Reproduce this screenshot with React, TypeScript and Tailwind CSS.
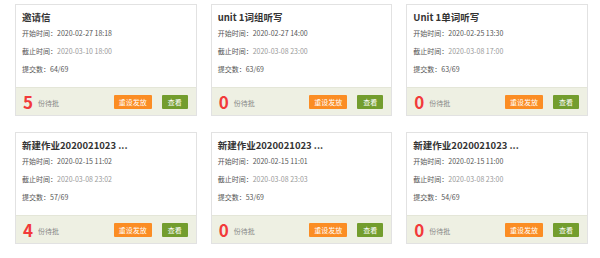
const cards = [
  { title: "邀请信", start: "2020-02-27 18:18", end: "2020-03-10 18:00", count: "64/69", pending: 5 },
  { title: "unit 1词组听写", start: "2020-02-27 14:00", end: "2020-03-08 23:00", count: "63/69", pending: 0 },
  { title: "Unit 1单词听写", start: "2020-02-25 13:30", end: "2020-03-08 17:00", count: "63/69", pending: 0 },
  { title: "新建作业2020021023 ...", start: "2020-02-15 11:02", end: "2020-03-08 23:02", count: "57/69", pending: 4 },
  { title: "新建作业2020021023 ...", start: "2020-02-15 11:01", end: "2020-03-08 23:03", count: "53/69", pending: 0 },
  { title: "新建作业2020021023 ...", start: "2020-02-15 11:00", end: "2020-03-08 23:00", count: "54/69", pending: 0 },
];

type Card = (typeof cards)[number];

function TaskCard({ card }: { card: Card }) {
  return (
    <div className="border border-[#e2e2e2] bg-white">
      <div className="px-[6px] pt-[5px] pb-[9px]">
        <div className="text-[9.5px] leading-[14px] font-bold text-[#333] whitespace-nowrap">{card.title}</div>
        <div className="text-[7px] leading-[18px] text-[#555]">开始时间：{card.start}</div>
        <div className="text-[7px] leading-[18px] text-[#555]">
          截止时间：<span className="text-[#999]">{card.end}</span>
        </div>
        <div className="text-[7px] leading-[18px] text-[#555]">提交数：{card.count}</div>
      </div>
      <div className="flex items-center h-[28px] bg-[#eef0e3] border-t border-[#e4e6d8] pl-[7px] pr-[8px]">
        <span className="text-[17px] leading-none font-bold text-[#f23a3a]">{card.pending}</span>
        <span className="ml-[5px] mt-[3px] text-[7px] text-[#888]">份待批</span>
        <button className="ml-auto w-[38px] h-[14px] bg-[#fb8d24] text-white text-[7px] leading-[14px] rounded-[1px]">
          重设发放
        </button>
        <button className="ml-[10px] w-[26px] h-[14px] bg-[#739d2e] text-white text-[7px] leading-[14px] rounded-[1px]">
          查看
        </button>
      </div>
    </div>
  );
}

export default function App() {
  return (
    <div
      className="w-[600px] h-[258px] bg-white pl-[15px] pr-[12px] pt-[4px]"
      style={{ fontFamily: '"Noto Sans CJK SC", "Noto Sans", sans-serif' }}
    >
      <div className="grid grid-cols-3 gap-x-[14px] gap-y-[16px]">
        {cards.map((c, i) => (
          <TaskCard key={i} card={c} />
        ))}
      </div>
    </div>
  );
}
